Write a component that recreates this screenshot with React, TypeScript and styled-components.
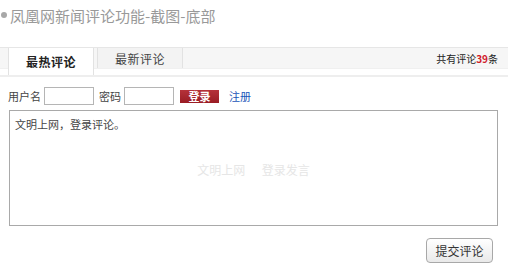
import styled, { createGlobalStyle } from "styled-components";

const GlobalStyle = createGlobalStyle`
  html, body {
    margin: 0;
    padding: 0;
    background: #fff;
  }
  body {
    font-family: "Noto Sans CJK SC", "Liberation Sans", sans-serif;
    font-size: 12px;
    color: #333;
  }
`;

const Page = styled.div`
  width: 508px;
  height: 266px;
  overflow: hidden;
  box-sizing: border-box;
`;

const Title = styled.h1`
  display: flex;
  align-items: center;
  gap: 3px;
  margin: 0;
  padding: 3px 0 0 0;
  height: 24px;
  font-size: 15px;
  font-weight: normal;
  color: #999;
`;

const Dot = styled.span`
  width: 6px;
  height: 6px;
  border-radius: 50%;
  background: #a8a8a8;
  margin-left: 1px;
`;

const TabBar = styled.div`
  margin-top: 20px;
  height: 20px;
  display: flex;
  align-items: stretch;
  background: #f6f6f6;
  border-top: 1px solid #e6e6e6;
  border-bottom: 1px solid #f0f0f0;
  padding-left: 8px;
  padding-right: 10px;
`;

const Tab = styled.div<{ $active?: boolean }>`
  width: 84px;
  display: flex;
  align-items: center;
  justify-content: center;
  margin-right: 3px;
  height: ${(p) => (p.$active ? "27px" : "20px")};
  background: ${(p) => (p.$active ? "#fff" : "#f3f3f3")};
  border-left: 1px solid #e2e2e2;
  border-right: 1px solid #e2e2e2;
  font-size: 12px;
  letter-spacing: 0.5px;
  font-weight: ${(p) => (p.$active ? "bold" : "normal")};
  color: ${(p) => (p.$active ? "#222" : "#444")};
  position: relative;
  z-index: 1;
`;

const Count = styled.div`
  margin-left: auto;
  display: flex;
  align-items: center;
  font-size: 10px;
  color: #222;
`;

const Num = styled.b`
  color: #d11c2b;
`;

const Divider = styled.div`
  margin-top: 6px;
  height: 2px;
  background: #eeeeee;
`;

const LoginRow = styled.div`
  display: flex;
  align-items: center;
  height: 18px;
  margin-top: 10px;
  padding-left: 8px;
  font-size: 11px;
  color: #444;
`;

const Label = styled.span`
  margin-right: 3px;
`;

const Input = styled.input`
  box-sizing: border-box;
  width: 50px;
  height: 18px;
  border: 1px solid #b5b5b5;
  margin: 0 5px 0 0;
  padding: 0;
`;

const LoginButton = styled.button`
  box-sizing: border-box;
  width: 39px;
  height: 13px;
  margin-left: 1px;
  padding: 0;
  border: none;
  background: linear-gradient(#b5323a, #9a1c24);
  color: #fff;
  font-family: inherit;
  font-size: 11px;
  font-weight: bold;
  line-height: 13px;
`;

const RegLink = styled.a`
  margin-left: 10px;
  color: #1a55b8;
  text-decoration: none;
  font-size: 11px;
`;

const TextArea = styled.div`
  box-sizing: border-box;
  position: relative;
  margin: 5px 0 0 9px;
  width: 489px;
  height: 116px;
  border: 1px solid #a9a9a9;
  padding: 5px 5px;
  font-size: 11px;
  color: #444;
`;

const Watermark = styled.div`
  position: absolute;
  left: 0;
  right: 0;
  top: 50px;
  text-align: center;
  font-size: 12px;
  color: #e6e6e6;
  word-spacing: 14px;
`;

const Footer = styled.div`
  display: flex;
  justify-content: flex-end;
  padding-right: 15px;
  margin-top: 12px;
`;

const SubmitButton = styled.button`
  box-sizing: border-box;
  width: 67px;
  height: 25px;
  border: 1px solid #a8a8a8;
  border-radius: 4px;
  background: linear-gradient(#ffffff, #e9e9e9);
  font-family: inherit;
  font-size: 12px;
  color: #333;
  padding: 0;
`;

export default function App() {
  return (
    <Page>
      <GlobalStyle />
      <Title>
        <Dot />
        凤凰网新闻评论功能-截图-底部
      </Title>
      <TabBar>
        <Tab $active>最热评论</Tab>
        <Tab>最新评论</Tab>
        <Count>
          共有评论<Num>39</Num>条
        </Count>
      </TabBar>
      <Divider />
      <LoginRow>
        <Label>用户名</Label>
        <Input />
        <Label>密码</Label>
        <Input />
        <LoginButton>登录</LoginButton>
        <RegLink>注册</RegLink>
      </LoginRow>
      <TextArea>
        文明上网，登录评论。
        <Watermark>文明上网 登录发言</Watermark>
      </TextArea>
      <Footer>
        <SubmitButton>提交评论</SubmitButton>
      </Footer>
    </Page>
  );
}
